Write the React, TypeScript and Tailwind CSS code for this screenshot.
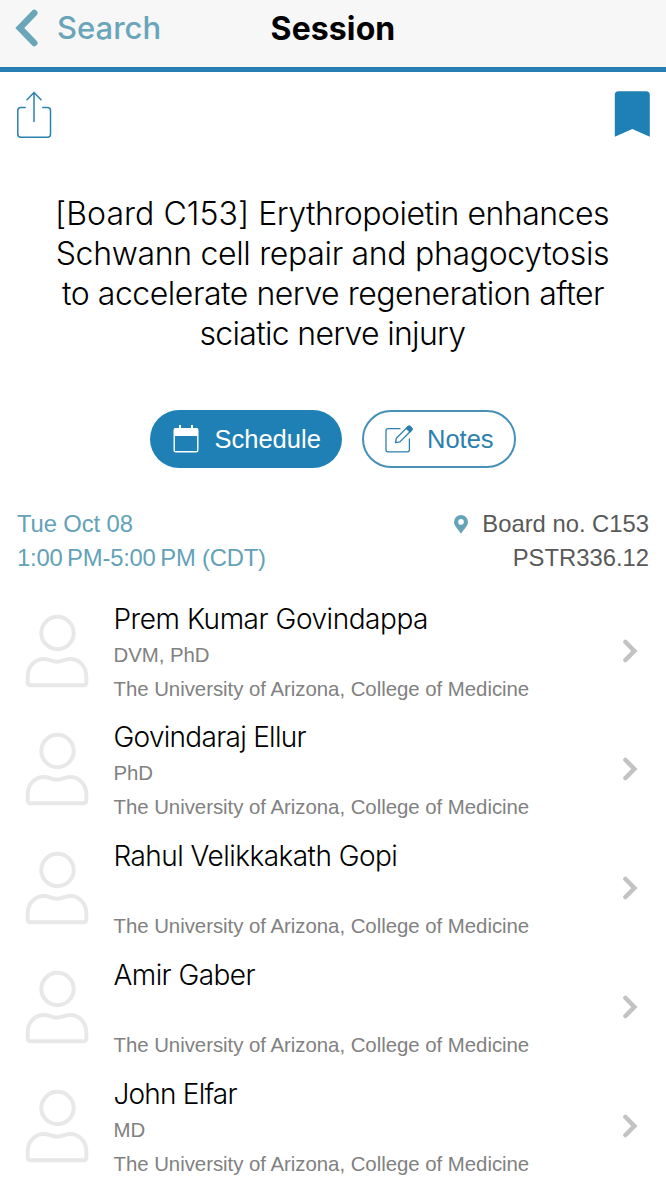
const ORG = "The University of Arizona, College of Medicine";

type Speaker = { name: string; tracking: string; degree?: string };

const speakers: Speaker[] = [
  { name: "Prem Kumar Govindappa", tracking: "tracking-[-0.46px]", degree: "DVM, PhD" },
  { name: "Govindaraj Ellur", tracking: "tracking-[-0.72px]", degree: "PhD" },
  { name: "Rahul Velikkakath Gopi", tracking: "tracking-[-0.54px]" },
  { name: "Amir Gaber", tracking: "tracking-[-0.57px]" },
  { name: "John Elfar", tracking: "tracking-[-0.8px]", degree: "MD" },
];

function BackIcon() {
  return (
    <svg className="h-[40px] w-[26px] shrink-0" viewBox="0 0 26 40" fill="none" stroke="#6aa5b9" strokeWidth="6.4" strokeLinecap="round" strokeLinejoin="miter">
      <path d="M21.300 5 6.800 20 21.300 35" />
    </svg>
  );
}

function ShareIcon() {
  return (
    <svg className="h-[48px] w-[36px]" viewBox="0 0 36 48" fill="none" stroke="#2a82ae" strokeWidth="1.5" strokeLinecap="round" strokeLinejoin="round">
      <path d="M9.200 16.500H4.800a3 3 0 0 0-3 3v23.700a3 3 0 0 0 3 3h26.700a3 3 0 0 0 3-3V19.500a3 3 0 0 0-3-3h-4.700M18 30.500V1.500M11 8.700l7-7.200 7 7.200" />
    </svg>
  );
}

function BookmarkIcon() {
  return (
    <svg className="h-[46px] w-[36px]" viewBox="0 0 36 46" fill="#1f80b5">
      <path d="M4.500 .2h27.600a3.700 3.700 0 0 1 3.700 3.700v41.900L18.300 38 .8 45.800V3.900A3.700 3.700 0 0 1 4.500 .2z" />
    </svg>
  );
}

function CalendarIcon() {
  return (
    <svg className="h-[28px] w-[26px]" viewBox="0 0 26 28" fill="none" stroke="#fff">
      <rect x="1.200" y="3.600" width="23.600" height="23.200" rx="1.600" strokeWidth="1.400" />
      <path d="M1 4.500A1.500 1.500 0 0 1 2.500 3h21A1.500 1.500 0 0 1 25 4.500V11H1z" fill="#fff" stroke="none" />
      <path d="M7 .6V4M19 .6V4" strokeWidth="2" strokeLinecap="round" />
    </svg>
  );
}

function NotesIcon() {
  return (
    <svg className="h-[28px] w-[28px]" viewBox="0 0 28 28" fill="none" stroke="#2b80ad" strokeWidth="1.300" strokeLinecap="round" strokeLinejoin="round">
      <path d="M15 3.600H3A2 2 0 0 0 1 5.600V24.800a2 2 0 0 0 2 2H22.400a2 2 0 0 0 2-2V14" />
      <path d="M10.500 17.600l.8-4.300L22.700 1.900a2 2 0 0 1 2.800 0l.8.8a2 2 0 0 1 0 2.800L14.900 16.900z" />
      <path d="M21.300 3.300l1.400-1.400a2 2 0 0 1 2.800 0l.8.8a2 2 0 0 1 0 2.800l-1.400 1.400z" fill="#2b80ad" />
    </svg>
  );
}

function PinIcon() {
  return (
    <svg className="h-[19px] w-[14px]" viewBox="0 0 14 19" fill="#65a4b8">
      <path fillRule="evenodd" d="M7 0a7 7 0 0 1 7 7c0 4-4.300 7.300-7 11.800C4.300 14.300 0 11 0 7a7 7 0 0 1 7-7zm0 4.100a2.800 2.800 0 1 0 0 5.600 2.800 2.800 0 0 0 0-5.600z" />
    </svg>
  );
}

function PersonIcon() {
  return (
    <svg className="h-[74px] w-[64px] shrink-0" viewBox="0 0 64 74" fill="none" stroke="#e8e8e8" strokeWidth="4" strokeLinejoin="round">
      <circle cx="32.500" cy="19" r="16.200" />
      <path d="M5.200 71.200H58.800a2.500 2.500 0 0 0 2.500-2.500v-6.500c0-9.500-7-17.300-16-17.300-5.500 0-7 2.800-13.300 2.800s-8-2.800-13.300-2.800c-9 0-16 7.800-16 17.300v6.500a2.500 2.500 0 0 0 2.500 2.500z" />
    </svg>
  );
}

function ChevronIcon() {
  return (
    <svg className="h-[24px] w-[16px] shrink-0" viewBox="0 0 16 24" fill="none" stroke="#c3c3c5" strokeWidth="4.600" strokeLinecap="round">
      <path d="M3.500 3l8.800 9-8.800 9" />
    </svg>
  );
}

function SpeakerRow({ name, tracking, degree }: Speaker) {
  return (
    <li className="flex h-[118.800px] pl-[25.400px] pr-[28px]">
      <div className="pt-[14px]">
        <PersonIcon />
      </div>
      <div className="flex-1 whitespace-nowrap pl-[24.100px]">
        <div className={`h-[38px] font-['Inter',sans-serif] text-[28px] font-light leading-[38px] text-black ${tracking}`}>{name}</div>
        <div className="h-[34px] text-[20.400px] leading-[34px] tracking-[-0.030px] text-[#818181]">{degree}</div>
        <div className="h-[34px] text-[20.400px] leading-[34px] tracking-[-0.030px] text-[#818181]">{ORG}</div>
      </div>
      <div className="pt-[39px]">
        <ChevronIcon />
      </div>
    </li>
  );
}

export default function App() {
  return (
    <main className="h-[1200px] w-[666px] overflow-hidden bg-white font-['Liberation_Sans',Arial,sans-serif]">
      <header className="grid h-[72px] grid-cols-[1fr_auto_1fr] border-b-[5px] border-[#267fb0] bg-[#f7f7f7] pb-[11px] font-['Inter',sans-serif]">
        <button className="flex items-center pl-[13px] text-[31px] font-medium text-[#6aa5b9]">
          <BackIcon />
          <span className="pl-[18px]">Search</span>
        </button>
        <h1 className="flex items-center pt-[2px] text-[32px] font-bold tracking-[0.100px] text-black">Session</h1>
      </header>

      <div className="flex justify-between pl-[16px] pr-[16px] pt-[19px]">
        <ShareIcon />
        <BookmarkIcon />
      </div>

      <h2 className="mt-[55px] flex flex-col items-center whitespace-nowrap font-['Inter',sans-serif] text-[32px] font-light leading-[40px] text-black">
        <span className="-ml-[2px] tracking-[-0.500px]"><span className="tracking-[0.060px]">[Board C153] </span>Erythropoietin enhances</span>
        <span className="-ml-px tracking-[-0.320px]">Schwann cell repair and phagocytosis</span>
        <span className="tracking-[-0.470px]">to accelerate nerve regeneration after</span>
        <span className="-ml-px tracking-[-0.700px]">sciatic nerve injury</span>
      </h2>

      <div className="mt-[56px] flex justify-center gap-[20px] text-[25.500px]">
        <button className="flex h-[58px] w-[192px] items-center rounded-full bg-[#1f80b5] pl-[22.500px] text-white">
          <CalendarIcon />
          <span className="pl-[16px]">Schedule</span>
        </button>
        <button className="flex h-[58px] w-[154px] items-center rounded-full border-2 border-[#4790b7] pl-[21px] text-[#2b80ad]">
          <NotesIcon />
          <span className="pl-[14px]">Notes</span>
        </button>
      </div>

      <section className="mt-[39px] flex justify-between whitespace-nowrap pl-[17px] pr-[17px] text-[23.800px] leading-[34px]">
        <div className="text-[#63a2b8]">
          <div className="tracking-[-0.100px]">Tue Oct 08</div>
          <div className="tracking-[-0.200px]">1:00{"\u2009"}PM-5:00{"\u2009"}PM (CDT)</div>
        </div>
        <div className="text-right text-[#595959]">
          <div className="flex items-center justify-end gap-[14px]">
            <PinIcon />
            <span>Board no. C153</span>
          </div>
          <div>PSTR336.12</div>
        </div>
      </section>

      <ul className="mt-[24.600px]">
        {speakers.map((s) => (
          <SpeakerRow key={s.name} {...s} />
        ))}
      </ul>
    </main>
  );
}
